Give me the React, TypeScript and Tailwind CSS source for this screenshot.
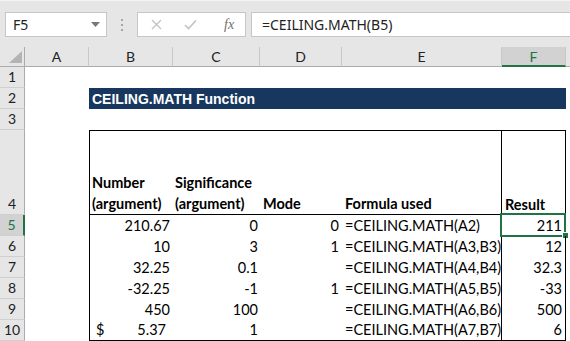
import React from "react";

const ui = { fontFamily: '"Noto Sans", "Open Sans", sans-serif' };
const cell = { fontFamily: 'Lato, "Open Sans", sans-serif' };

const cols = ["A", "B", "C", "D", "E", "F"];

type Row = { b: React.ReactNode; c: string; d: string; e: string; f: string };

const rows: Row[] = [
  { b: "210.67", c: "0", d: "0", e: "=CEILING.MATH(A2)", f: "211" },
  { b: "10", c: "3", d: "1", e: "=CEILING.MATH(A3,B3)", f: "12" },
  { b: "32.25", c: "0.1", d: "", e: "=CEILING.MATH(A4,B4)", f: "32.3" },
  { b: "-32.25", c: "-1", d: "1", e: "=CEILING.MATH(A5,B5)", f: "-33" },
  { b: "450", c: "100", d: "", e: "=CEILING.MATH(A6,B6)", f: "500" },
  {
    b: (
      <span className="flex justify-between w-full pl-[6px] pr-[4px]">
        <span>$</span>
        <span>5.37</span>
      </span>
    ),
    c: "1",
    d: "",
    e: "=CEILING.MATH(A7,B7)",
    f: "6",
  },
];

function RowHead({ n, active }: { n: number; active?: boolean }) {
  return (
    <div
      className={
        "flex items-end justify-center leading-[21px] text-[14px] border-b border-[#cfcfcf] " +
        (active
          ? "bg-[#d2d2d2] text-[#217346] border-r-2 border-r-[#217346]"
          : "bg-[#e6e6e6] text-[#222] border-r border-r-[#ababab]")
      }
      style={cell}
    >
      {n}
    </div>
  );
}

export default function App() {
  return (
    <div className="w-[570px] h-[341px] overflow-hidden bg-white text-black">
      {/* Formula bar */}
      <div className="h-[47px] bg-[#e6e6e6] border-t border-[#f4f4f4] flex pt-[11px]" style={ui}>
        <div className="ml-[5px] w-[102px] h-[25px] bg-white border border-[#c6c6c6] flex items-center justify-between pl-[7px] pr-[6px] text-[14px] text-[#222]">
          <span>F5</span>
          <svg width="9" height="5" viewBox="0 0 9 5">
            <path d="M0 0 H9 L4.5 5 Z" fill="#777" />
          </svg>
        </div>
        <div className="w-[30px] flex flex-col items-center justify-center gap-[3px] h-[25px]">
          <span className="w-[2px] h-[2px] bg-[#a6a6a6]" />
          <span className="w-[2px] h-[2px] bg-[#a6a6a6]" />
          <span className="w-[2px] h-[2px] bg-[#a6a6a6]" />
        </div>
        <div className="w-[109px] h-[25px] bg-white border border-[#c6c6c6] flex items-center pl-[13px] gap-[22px]">
          <svg width="11" height="11" viewBox="0 0 11 11">
            <path d="M1 1 L10 10 M10 1 L1 10" stroke="#c2c2c2" strokeWidth="1.3" />
          </svg>
          <svg width="13" height="11" viewBox="0 0 13 11">
            <path d="M1 6 L4.5 9.5 L12 1.5" stroke="#c2c2c2" strokeWidth="1.6" fill="none" />
          </svg>
          <span
            className="text-[14px] italic text-[#6f6f6f] ml-[5px]"
            style={{ fontFamily: '"Liberation Serif", serif' }}
          >
            fx
          </span>
        </div>
        <div className="ml-[5px] flex-1 h-[25px] bg-white border border-r-0 border-[#c6c6c6] flex items-center pl-[10px] text-[14px] text-[#222]">
          =CEILING.MATH(B5)
        </div>
      </div>

      {/* Sheet grid */}
      <div
        className="grid grid-cols-[25px_64px_84px_87px_82px_160px_64px_1fr] grid-rows-[20px_21px_21px_21px_85px_21px_21px_21px_21px_21px_21px]"
        style={cell}
      >
        {/* column headers */}
        <div className="bg-[#e6e6e6] border-r border-b border-[#ababab] flex items-end justify-end pr-[2px] pb-[3px]">
          <svg width="13" height="12" viewBox="0 0 13 12">
            <path d="M13 0 V12 H0 Z" fill="#b4b4b4" />
          </svg>
        </div>
        {cols.map((c) =>
          c === "F" ? (
            <div
              key={c}
              className="bg-[#d2d2d2] border-b-2 border-[#217346] border-r border-r-[#c8c8c8] flex items-center justify-center text-[14px] text-[#217346]"
            >
              {c}
            </div>
          ) : (
            <div
              key={c}
              className="bg-[#e6e6e6] border-b border-[#ababab] border-r border-r-[#c8c8c8] flex items-center justify-center text-[14px] text-[#222]"
            >
              {c}
            </div>
          )
        )}
        <div className="bg-[#e6e6e6] border-b border-[#ababab]" />

        {/* row 1 */}
        <RowHead n={1} />
        <div className="col-span-7" />

        {/* row 2 */}
        <RowHead n={2} />
        <div />
        <div
          className="col-span-5 bg-[#17375e] text-white font-bold text-[14px] flex items-center pl-[3px] pt-[2px]"
          style={{ fontFamily: '"Liberation Sans", Arial, sans-serif' }}
        >
          CEILING.MATH Function
        </div>
        <div />

        {/* row 3 */}
        <RowHead n={3} />
        <div className="col-span-7" />

        {/* row 4 */}
        <RowHead n={4} />
        <div />
        <div className="border-l border-t border-b border-black font-bold text-[14.5px] leading-[21px] flex flex-col justify-end pl-[2px]">
          <span>Number</span>
          <span>(argument)</span>
        </div>
        <div className="border-t border-b border-black font-bold text-[14.5px] leading-[21px] flex flex-col justify-end pl-[2px]">
          <span>Significance</span>
          <span>(argument)</span>
        </div>
        <div className="border-t border-b border-black font-bold text-[14.5px] leading-[21px] flex flex-col justify-end pl-[3px]">
          <span>Mode</span>
        </div>
        <div className="border-t border-b border-r border-black font-bold text-[14.5px] leading-[21px] flex flex-col justify-end pl-[3px]">
          <span>Formula used</span>
        </div>
        <div className="border-t border-r border-black font-bold text-[14.5px] leading-[21px] flex flex-col justify-end pl-[3px]">
          <span>Result</span>
        </div>
        <div />

        {/* rows 5-10 */}
        {rows.map((r, i) => {
          const last = i === rows.length - 1;
          const bot = last ? " border-b border-black" : "";
          return (
            <React.Fragment key={i}>
              <RowHead n={i + 5} active={i === 0} />
              <div />
              <div className={"border-l border-black flex items-center justify-end pr-[3px] text-[14.5px]" + bot}>
                {r.b}
              </div>
              <div className={"flex items-center justify-end pr-[2px] text-[14.5px]" + bot}>{r.c}</div>
              <div className={"flex items-center justify-end pr-[3px] text-[14.5px]" + bot}>{r.d}</div>
              <div className={"border-r border-black flex items-center pl-[3px] text-[14.5px]" + bot}>{r.e}</div>
              <div className={"relative border-r border-black flex items-center justify-end pr-[3px] text-[14.5px]" + bot}>
                {r.f}
                {i === 0 && (
                  <>
                    <div className="absolute left-[-2px] top-[-2px] right-[-1px] bottom-[-1px] border-2 border-[#217346]" />
                    <div className="absolute right-[-4px] bottom-[-3px] w-[5px] h-[5px] bg-[#217346] border border-white box-content" />
                  </>
                )}
              </div>
              <div />
            </React.Fragment>
          );
        })}
      </div>
    </div>
  );
}
